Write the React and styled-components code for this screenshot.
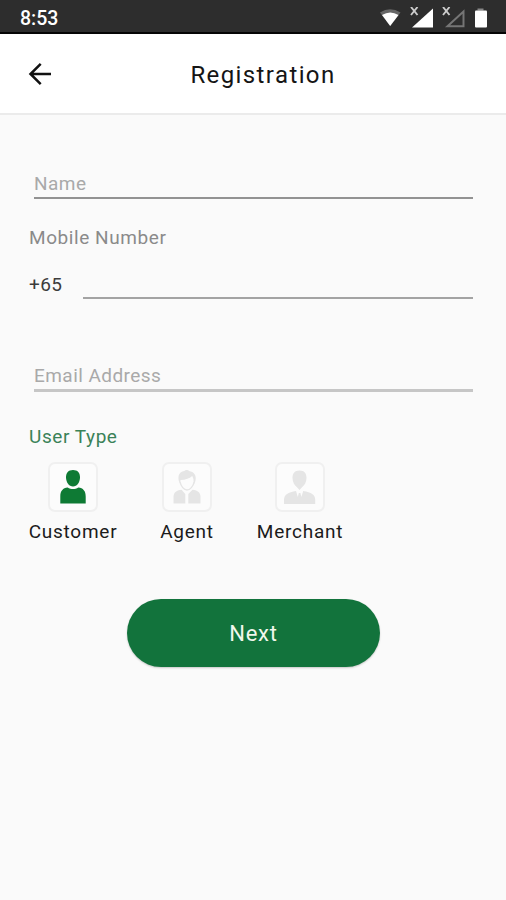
import React, { useState } from "react";
import styled, { createGlobalStyle } from "styled-components";

const userTypes = [
  { id: "customer", label: "Customer", width: 88, Icon: CustomerIcon },
  { id: "agent", label: "Agent", width: 54, Icon: AgentIcon },
  { id: "merchant", label: "Merchant", width: 86, Icon: MerchantIcon },
];

function CustomerIcon() {
  return (
    <svg width="48" height="48" viewBox="0 0 48 48" fill="currentColor">
      <path d="M24 7c4.600 0 7 2.800 7 7.200 0 5-3 9.300-7 9.300s-7-4.300-7-9.300C17 9.800 19.400 7 24 7z" />
      <path d="M11.300 40.500v-7c0-5.500 2.500-8.500 7.400-9 3.200 2 7.400 2 10.600 0 4.900.5 7.400 3.500 7.400 9v7z" />
    </svg>
  );
}

function AgentIcon() {
  return (
    <svg width="48" height="48" viewBox="0 0 48 48" fill="currentColor">
      <path d="M16 18.500C14.200 12 17 8.500 21.500 8c.8-1.400 3.500-1.400 4.500 0 5 .6 8 4.500 6.300 10.500L30.500 22c.5-4 0-6.800-1.300-9-2.700 2.500-6.500 3.800-11.700 4v4z" />
      <path d="M17 19c1 4.300 4 8 7 8s6.200-3.700 7.200-8" fill="none" stroke="currentColor" strokeWidth="1.300" />
      <path d="M10.500 40.500V34c0-4 2.500-6.800 8-7.300l3.800 4.300v9.500z" />
      <path d="M37.500 40.500V34c0-4-2.500-6.800-8-7.300L25.300 31v9.500z" />
    </svg>
  );
}

function MerchantIcon() {
  return (
    <svg width="48" height="48" viewBox="0 0 48 48" fill="currentColor">
      <path d="M23.500 7.500c4.700 0 7 2.700 7 7.500 0 4-2 7.300-4.500 9.200L23.500 27 21 24.200c-2.500-1.900-4.500-5.200-4.500-9.200 0-4.800 2.300-7.500 7-7.500z" />
      <path d="M8 41v-4.300c0-5 4-7.400 12-8.700l1.800 6 1-4h1.600l1 4 1.800-6c8 1.300 12 3.700 12 8.700V41z" />
    </svg>
  );
}

const StatusIcons = () => (
  <svg width="112" height="24" viewBox="0 0 112 24">
    <path d="M2 5.500Q12 -1 22.500 5.500L12.200 19z" fill="#666" />
    <path d="M4 8Q12.200 3 20.500 8L12.200 19z" fill="#fff" />
    <path d="M33 0l6.500 8M39.500 0L33 8" stroke="#ccc" strokeWidth="1.900" />
    <path d="M34 20.500L55 1.500v19z" fill="#fff" />
    <path d="M65 0l6.500 8M71.500 0L65 8" stroke="#ccc" strokeWidth="1.900" />
    <path d="M69.500 19.300L85.500 4.500v14.800z" fill="none" stroke="#757575" strokeWidth="2" />
    <path d="M99.500 1.500h6v2h-6z" fill="#888" />
    <rect x="97" y="3.500" width="12" height="17" rx="1" fill="#fff" />
  </svg>
);

const App = () => {
  const [selected, setSelected] = useState("customer");

  return (
    <Screen>
      <GlobalStyle />
      <StatusBar>
        <Clock>8:53</Clock>
        <StatusIcons />
      </StatusBar>
      <Header>
        <BackButton aria-label="Back">
          <svg width="24" height="24" viewBox="0 0 24 24" fill="none" stroke="#111" strokeWidth="2.500">
            <path d="M23 12H3M12.700 1.800L2.500 12l10.200 10.200" />
          </svg>
        </BackButton>
        <Title>Registration</Title>
      </Header>
      <Form>
        <Field $color="#929292">Name</Field>
        <Label>Mobile Number</Label>
        <PhoneRow>
          <CountryCode>+65</CountryCode>
          <PhoneLine />
        </PhoneRow>
        <EmailField $color="#c6c6c6">Email Address</EmailField>
        <Label $green>User Type</Label>
        <TypeList>
          {userTypes.map(({ id, label, width, Icon }) => (
            <TypeOption key={id} $width={width} onClick={() => setSelected(id)}>
              <TypeTile $active={selected === id}>
                <Icon />
              </TypeTile>
              <TypeName>{label}</TypeName>
            </TypeOption>
          ))}
        </TypeList>
        <NextButton>Next</NextButton>
      </Form>
    </Screen>
  );
};

export default App;

const GlobalStyle = createGlobalStyle`
  * {
    box-sizing: border-box;
  }

  body {
    margin: 0;
    background: #fafafa;
    font-family: Roboto, "Liberation Sans", sans-serif;
  }

  button {
    border: none;
    padding: 0;
    background: none;
    font-family: inherit;
    cursor: pointer;
  }
`;

const Screen = styled.div`
  width: 506px;
  height: 900px;
  background: #fafafa;
  overflow: hidden;
`;

const StatusBar = styled.div`
  display: flex;
  align-items: center;
  justify-content: space-between;
  height: 34px;
  padding: 5px 16px 0 20px;
  background: #2d2d2d;
  border-bottom: 2px solid #050505;
`;

const Clock = styled.span`
  color: #fff;
  font-size: 19.5px;
  font-weight: 500;
  line-height: 24px;
`;

const Header = styled.header`
  display: grid;
  grid-template-columns: 100px 1fr 80px;
  align-items: center;
  height: 81px;
  background: #fff;
  border-bottom: 2px solid #ebebeb;
`;

const BackButton = styled.button`
  display: flex;
  justify-content: center;
  width: 80px;
`;

const Title = styled.h1`
  margin: 0;
  padding-top: 2px;
  color: #151515;
  font-size: 24px;
  font-weight: 400;
  line-height: 28px;
  letter-spacing: 1.4px;
  text-align: center;
  white-space: nowrap;
`;

const Form = styled.div`
  display: flex;
  flex-direction: column;
  padding: 57px 33px 0 29px;
`;

const Field = styled.div`
  height: 27px;
  margin-left: 5px;
  border-bottom: 2px solid ${({ $color }) => $color};
  color: #a9a9a9;
  font-size: 19px;
  line-height: 24px;
  letter-spacing: 0.45px;
`;

const EmailField = styled(Field)`
  height: 28px;
  margin-top: 65px;
  margin-bottom: 33px;
  border-bottom-width: 3px;
`;

const Label = styled.div`
  margin-top: ${({ $green }) => ($green ? 0 : 27)}px;
  color: ${({ $green }) => ($green ? "#3a8258" : "#8a8a8a")};
  font-size: 19px;
  line-height: 24px;
  letter-spacing: 0.57px;
`;

const PhoneRow = styled.div`
  display: flex;
  height: 26px;
  margin-top: 23px;
`;

const CountryCode = styled.span`
  width: 54px;
  color: #3c3c3c;
  font-size: 19px;
  line-height: 24px;
  letter-spacing: 0.4px;
`;

const PhoneLine = styled.div`
  flex: 1;
  border-bottom: 2px solid #a3a3a3;
`;

const TypeList = styled.div`
  display: flex;
  gap: 43px;
  margin-top: 13px;
`;

const TypeOption = styled.button`
  display: flex;
  flex-direction: column;
  align-items: center;
  width: ${({ $width }) => $width}px;
`;

const TypeTile = styled.span`
  display: flex;
  align-items: center;
  justify-content: center;
  width: 50px;
  height: 50px;
  border: 2px solid #f0f0f0;
  border-radius: 7px;
  background: #fcfcfc;
  color: ${({ $active }) => ($active ? "#0e7a34" : "#e5e5e5")};

  svg {
    flex-shrink: 0;
  }
`;

const TypeName = styled.span`
  margin-top: 8px;
  color: #1b1b1b;
  font-size: 19px;
  line-height: 24px;
  letter-spacing: 0.75px;
  white-space: nowrap;
`;

const NextButton = styled.button`
  align-self: center;
  width: 253px;
  height: 68px;
  margin-top: 55px;
  margin-left: 5px;
  border-radius: 34px;
  background: #12733c;
  box-shadow: 0 1px 2px rgba(0, 0, 0, 0.2);
  color: #f1f7ec;
  font-size: 22px;
  letter-spacing: 0.8px;
`;
